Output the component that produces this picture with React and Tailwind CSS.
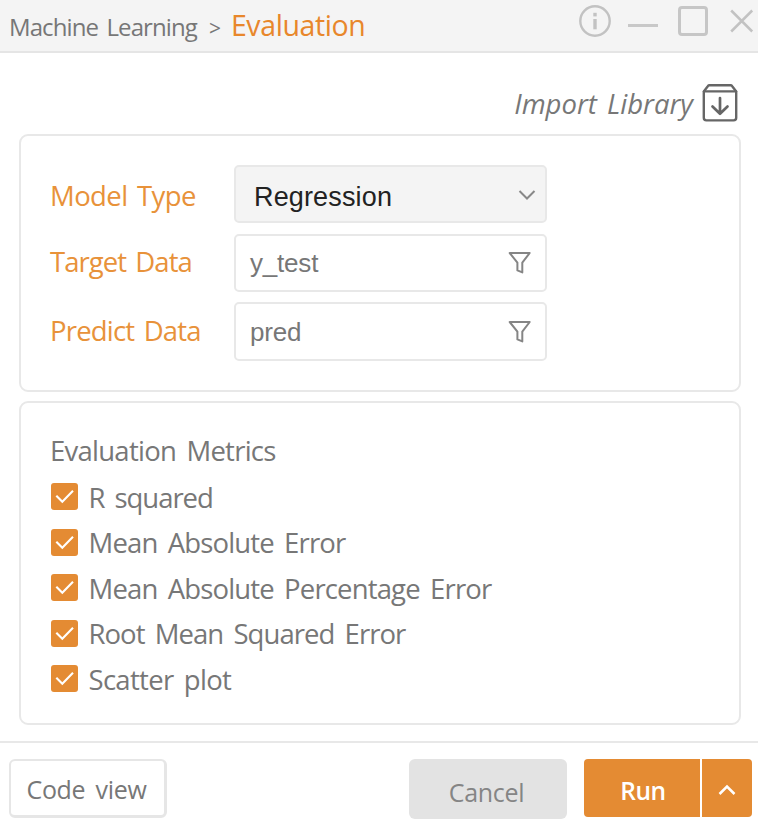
import React from "react";

const metrics = [
  { label: "R squared", tracking: "tracking-[-1.05px]" },
  { label: "Mean Absolute Error", tracking: "tracking-[-0.85px]" },
  { label: "Mean Absolute Percentage Error", tracking: "tracking-[-0.85px]" },
  { label: "Root Mean Squared Error", tracking: "tracking-[-0.95px]" },
  { label: "Scatter plot", tracking: "tracking-[-0.7px]" },
];

function InfoIcon() {
  return (
    <svg className="block h-[34px] w-[34px]" viewBox="0 0 34 34" fill="none" stroke="#c2c2c2" strokeWidth="2.4">
      <circle cx="17" cy="17" r="14.7" />
      <path d="M17 15v10.3" strokeWidth="3.4" />
      <path d="M17 8.8v3.6" strokeWidth="3.4" />
    </svg>
  );
}

function FunnelIcon() {
  return (
    <svg className="block h-6 w-6" viewBox="0 0 24 24" fill="none" stroke="#858585" strokeWidth="2" strokeLinejoin="round">
      <path d="M1.7 2h20l-7.4 9.600v9.800l-4.900-2v-7.800z" />
    </svg>
  );
}

function ImportIcon() {
  return (
    <svg className="block h-[38px] w-[36px]" viewBox="0 0 36 38" fill="none" stroke="#666" strokeWidth="2.4" strokeLinejoin="round" strokeLinecap="round">
      <path d="M1.8 7.4v26.4q0 2.6 2.6 2.6h27.2q2.6 0 2.6-2.6V7.4l-4-5.2q-.6-.9-1.8-.9H7.600q-1.200 0-1.800.9z" />
      <path d="M2 7.400h32" />
      <path d="M18 14v15.500M10.500 22.500l7.500 7.300 7.500-7.300" strokeWidth="2.700" />
    </svg>
  );
}

function Field({ label, labelClass, height, children }) {
  return (
    <div className={"flex items-center " + height}>
      <span className={"w-[184px] whitespace-nowrap text-[27.5px] leading-none [word-spacing:3px] text-[#e8923a] " + labelClass}>{label}</span>
      {children}
    </div>
  );
}

function DataInput({ value, className }) {
  return (
    <div className="flex h-full w-[313px] items-center justify-between rounded-[5px] border-2 border-[#e8e8e8] bg-white pr-[13px] pl-[14px] font-['Liberation_Sans',Arial,sans-serif] text-[26px] leading-none text-[#777]">
      <span className={className}>{value}</span>
      <FunnelIcon />
    </div>
  );
}

function Checkbox() {
  return (
    <span className="flex h-[27px] w-[27px] shrink-0 items-center justify-center rounded-[3px] bg-[#e48b33]">
      <svg className="block h-[27px] w-[27px]" viewBox="0 0 27 27" fill="none" stroke="#fff" strokeWidth="2.1">
        <path d="M5.300 12.800l6 6L22 7.700" />
      </svg>
    </span>
  );
}

export default function App() {
  return (
    <div className="flex h-[825px] w-[758px] flex-col overflow-hidden bg-white font-['Open_Sans','Noto_Sans',sans-serif] text-[#777]">
      <header className="flex h-[53px] shrink-0 justify-between border-b-2 border-[#e5e5e5] bg-[#f4f4f4] pl-[9px]">
        <div className="flex h-[51px] items-baseline whitespace-nowrap leading-[51px]">
          <span className="text-[24px] tracking-[-0.9px] [word-spacing:3px]">Machine Learning</span>
          <span className="ml-[12px] text-[21px]">&gt;</span>
          <span className="ml-[10px] text-[28.5px] tracking-[-0.4px] text-[#e8872b]">Evaluation</span>
        </div>
        <div className="flex items-start">
          <div className="mt-[4px]"><InfoIcon /></div>
          <div className="mt-[24px] ml-[16px] h-[3px] w-[30px] bg-[#c8c8c8]" />
          <div className="mt-[6px] ml-[20px] h-[30px] w-[30px] rounded-[4px] border-[3px] border-[#c6c6c6]" />
          <svg className="mt-[9px] ml-[22px] block h-6 w-[28px]" viewBox="0 0 28 24" fill="none" stroke="#c2c2c2" strokeWidth="2.500">
            <path d="M1.200 1.500l21 21M22.200 1.500l-21 21" />
          </svg>
        </div>
      </header>

      <main className="flex h-[688px] shrink-0 flex-col px-[19px] pr-[17px]">
        <div className="flex h-[81px] items-end justify-end pr-[3px] pb-[12px]">
          <span className="mr-[9px] mb-[5px] text-[27.5px] leading-none italic [word-spacing:3px]">Import Library</span>
          <ImportIcon />
        </div>

        <section className="flex h-[258px] shrink-0 flex-col rounded-[9px] border-2 border-[#e8e8e8] pt-[29px] pl-[29px]">
          <Field label="Model Type" labelClass="tracking-[-0.6px] pt-[4px]" height="h-[58px]">
            <div className="flex h-full w-[313px] items-center justify-between rounded-[5px] border-2 border-[#e8e8e8] bg-[#f4f4f4] pr-[9px] pl-[18px] font-['Liberation_Sans',Arial,sans-serif] text-[27px] leading-none tracking-[0.15px] text-[#222]">
              <span className="pt-[6px]">Regression</span>
              <svg className="mt-[2px] block h-[12px] w-[18px]" viewBox="0 0 18 12" fill="none" stroke="#888" strokeWidth="2">
                <path d="M1.500 2l7.500 7.500L16.500 2" />
              </svg>
            </div>
          </Field>
          <div className="h-[11px]" />
          <Field label="Target Data" labelClass="tracking-[-0.95px] pb-[2px]" height="h-[58px]">
            <DataInput value="y_test" className="tracking-[-0.2px]" />
          </Field>
          <div className="h-[10px]" />
          <Field label="Predict Data" labelClass="tracking-[-0.8px] pb-[1px]" height="h-[59px]">
            <DataInput value="pred" className="tracking-[-0.2px]" />
          </Field>
        </section>

        <section className="mt-[9px] flex h-[324px] shrink-0 flex-col rounded-[9px] border-2 border-[#e8e8e8] pt-[33px] pl-[29px]">
          <h2 className="text-[27.5px] leading-[30px] tracking-[-0.75px] [word-spacing:4px]">Evaluation Metrics</h2>
          <ul className="mt-[8px] flex flex-col pl-[1px]">
            {metrics.map((m) => (
              <li key={m.label} className="flex h-[45.500px] items-center gap-[10.5px]">
                <Checkbox />
                <span className={"whitespace-nowrap pt-[1px] text-[27.5px] leading-none [word-spacing:4px] " + m.tracking}>{m.label}</span>
              </li>
            ))}
          </ul>
        </section>
      </main>

      <footer className="flex h-[84px] shrink-0 items-start justify-between border-t-2 border-[#e8e8e8] pt-[16px] pr-[6px] pl-[9px]">
        <button className="h-[59px] w-[158px] rounded-[6px] border-2 border-r-[3px] border-b-[3px] border-[#e6e6e6] bg-white pt-[2px] pr-[2px] text-[25px] leading-none tracking-[-0.3px] [word-spacing:4px]">
          Code view
        </button>
        <div className="flex items-start">
          <button className="h-[60px] w-[158px] rounded-[6px] bg-[#e3e3e3] pt-[6px] pr-[3px] text-[25px] leading-none tracking-[-0.3px] text-[#858585]">Cancel</button>
          <button className="ml-[17px] h-[58px] w-[116px] rounded-l-[4px] bg-[#e48b33] pt-[6px] pl-[2px] text-[24.5px] leading-none font-semibold tracking-[-0.4px] text-white">Run</button>
          <button className="ml-[2px] flex h-[58px] w-[50px] items-center justify-center rounded-r-[4px] bg-[#e48b33] pt-[3px]">
            <svg className="block h-[12px] w-[18px]" viewBox="0 0 18 12" fill="none" stroke="#fff" strokeWidth="2.500">
              <path d="M1.500 10L9 2.500l7.500 7.500" />
            </svg>
          </button>
        </div>
      </footer>
    </div>
  );
}
